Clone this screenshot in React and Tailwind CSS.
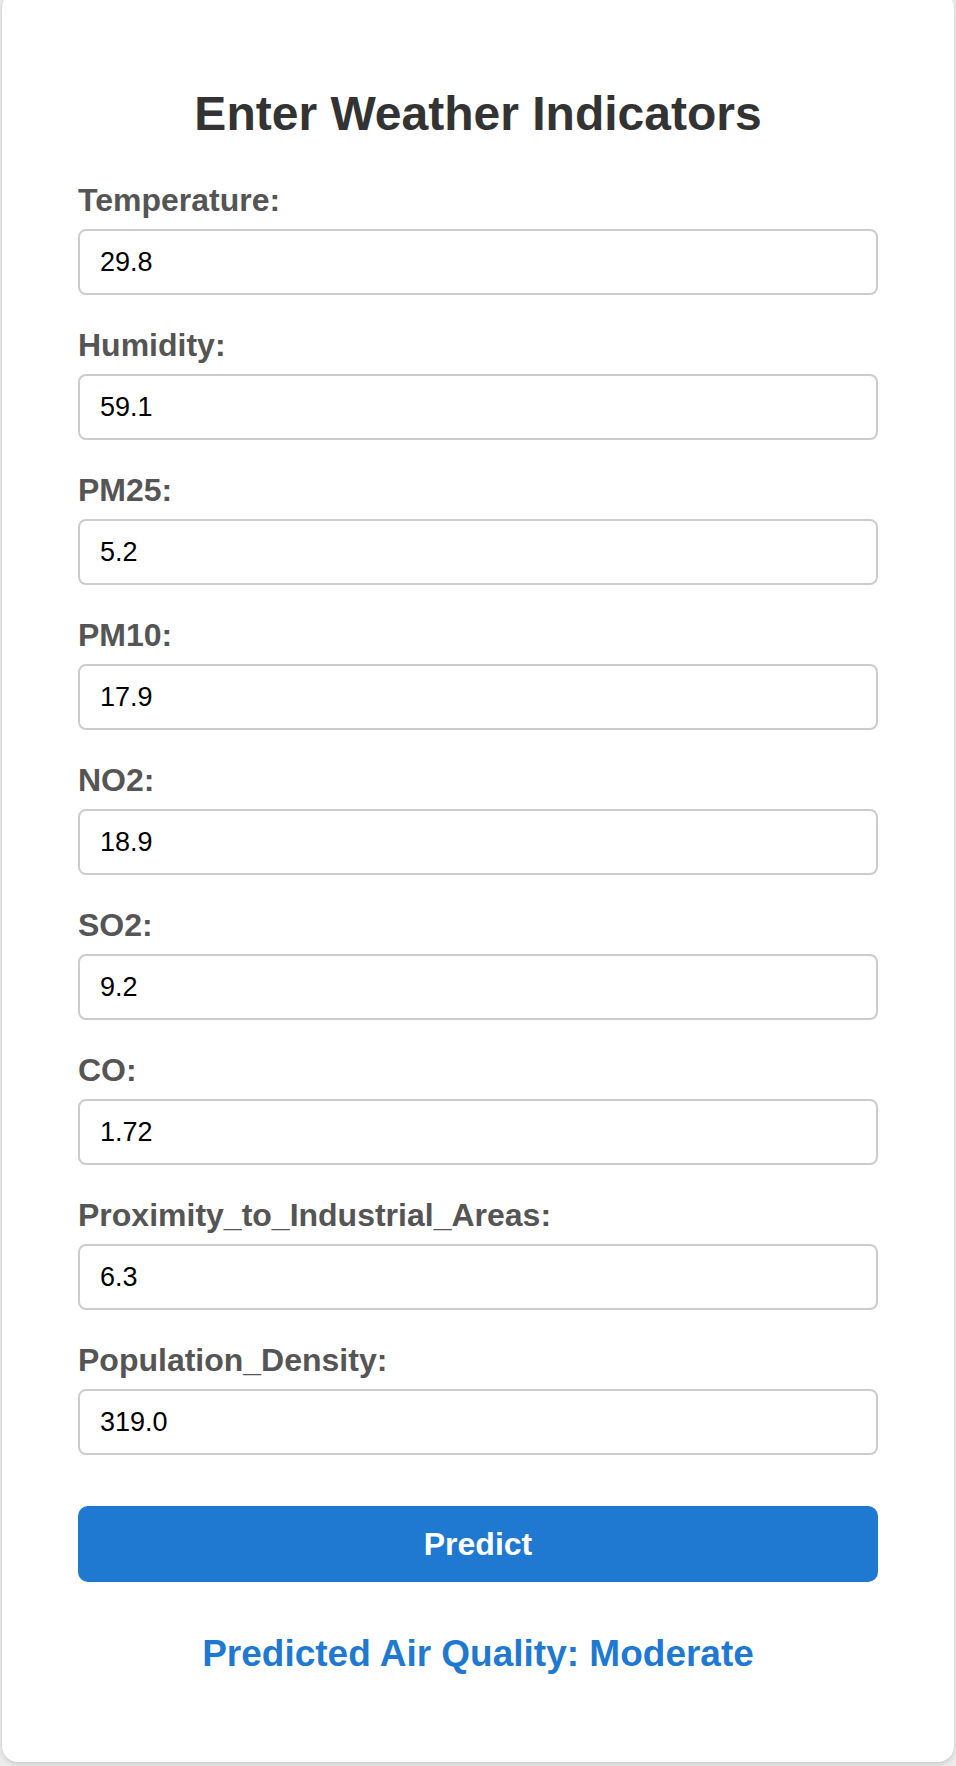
import React, { useState } from 'react';

const FIELDS = [
    { name: 'Temperature', value: '29.8' },
    { name: 'Humidity', value: '59.1' },
    { name: 'PM25', value: '5.2' },
    { name: 'PM10', value: '17.9' },
    { name: 'NO2', value: '18.9' },
    { name: 'SO2', value: '9.2' },
    { name: 'CO', value: '1.72' },
    { name: 'Proximity_to_Industrial_Areas', value: '6.3' },
    { name: 'Population_Density', value: '319.0' },
];

const Field = ({ name, value, onChange }) => (
    <div className="flex flex-col mb-[32px]">
        <label
            htmlFor={name}
            className="block text-[32px] leading-[37px] font-bold text-[#555] mb-[10px]"
        >
            {name}:
        </label>
        <input
            id={name}
            name={name}
            type="text"
            value={value}
            onChange={(e) => onChange(name, e.target.value)}
            className="
                w-full h-[66px] px-[20px]
                border-2 border-[#ccc] rounded-[8px]
                text-[27px] text-black bg-white
                focus:outline-none
            "
        />
    </div>
);

const App = () => {
    const [values, setValues] = useState(
        Object.fromEntries(FIELDS.map((f) => [f.name, f.value]))
    );

    const handleChange = (name, value) => {
        setValues((prev) => ({ ...prev, [name]: value }));
    };

    return (
        <div className="flex flex-col min-h-[1766px] bg-[#ececec] font-['Liberation_Sans',Arial,sans-serif]">
            <div className="
                mx-[2px] -mt-[8px] h-[1770px]
                bg-white rounded-[16px]
                shadow-[0_2px_5px_rgba(0,0,0,0.15)]
                px-[76px] pt-[94px]
            ">
                <h2 className="text-[48px] leading-[56px] font-bold text-[#333] text-center mb-[40px]">
                    Enter Weather Indicators
                </h2>
                <form onSubmit={(e) => e.preventDefault()}>
                    {FIELDS.map((f) => (
                        <Field
                            key={f.name}
                            name={f.name}
                            value={values[f.name]}
                            onChange={handleChange}
                        />
                    ))}
                    <button
                        type="submit"
                        className="
                            w-full h-[76px] mt-[19px]
                            bg-[#1f79d1] rounded-[10px]
                            text-white text-[32px] font-bold
                        "
                    >
                        Predict
                    </button>
                </form>
                <h3 className="text-[37px] leading-[43px] font-bold text-[#1f79d1] text-center mt-[50px]">
                    Predicted Air Quality: Moderate
                </h3>
            </div>
        </div>
    );
};

export default App;
